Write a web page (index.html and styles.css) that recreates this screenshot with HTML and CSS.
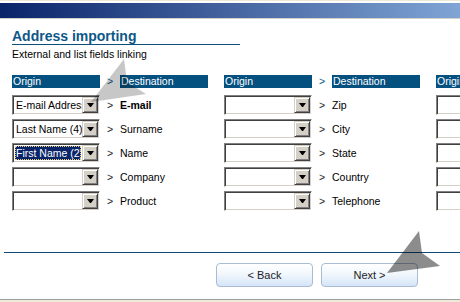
FILE: index.html
```html
<!DOCTYPE html>
<html lang="en">
  <head>
    <meta charset="UTF-8" />
    <title>Address importing</title>
    <link rel="stylesheet" href="styles.css">
  </head>

  <body>
    <div class="window">
      <div class="caption"><div class="caption-fill"></div></div>

      <div class="page">
        <h1 class="title">Address importing</h1>
        <p class="subtitle">External and list fields linking</p>

        <div class="mapping">
          <div class="group">
            <div class="bar">Origin</div><div class="sep head">&gt;</div><div class="bar">Destination</div>

            <div class="combo"><span class="value">E-mail Address</span><span class="drop"></span></div>
            <div class="sep">&gt;</div><div class="dest bold">E-mail</div>

            <div class="combo"><span class="value">Last Name (4)</span><span class="drop"></span></div>
            <div class="sep">&gt;</div><div class="dest">Surname</div>

            <div class="combo"><span class="value selected">First Name (2)</span><span class="drop"></span></div>
            <div class="sep">&gt;</div><div class="dest">Name</div>

            <div class="combo"><span class="value"></span><span class="drop"></span></div>
            <div class="sep">&gt;</div><div class="dest">Company</div>

            <div class="combo"><span class="value"></span><span class="drop"></span></div>
            <div class="sep">&gt;</div><div class="dest">Product</div>
          </div>

          <div class="group">
            <div class="bar">Origin</div><div class="sep head">&gt;</div><div class="bar">Destination</div>

            <div class="combo"><span class="value"></span><span class="drop"></span></div>
            <div class="sep">&gt;</div><div class="dest">Zip</div>

            <div class="combo"><span class="value"></span><span class="drop"></span></div>
            <div class="sep">&gt;</div><div class="dest">City</div>

            <div class="combo"><span class="value"></span><span class="drop"></span></div>
            <div class="sep">&gt;</div><div class="dest">State</div>

            <div class="combo"><span class="value"></span><span class="drop"></span></div>
            <div class="sep">&gt;</div><div class="dest">Country</div>

            <div class="combo"><span class="value"></span><span class="drop"></span></div>
            <div class="sep">&gt;</div><div class="dest">Telephone</div>
          </div>

          <div class="group">
            <div class="bar">Origin</div><div class="sep head">&gt;</div><div class="bar">Destination</div>
            <div class="combo"><span class="value"></span><span class="drop"></span></div>
            <div class="sep">&gt;</div><div class="dest"></div>
            <div class="combo"><span class="value"></span><span class="drop"></span></div>
            <div class="sep">&gt;</div><div class="dest"></div>
            <div class="combo"><span class="value"></span><span class="drop"></span></div>
            <div class="sep">&gt;</div><div class="dest"></div>
            <div class="combo"><span class="value"></span><span class="drop"></span></div>
            <div class="sep">&gt;</div><div class="dest"></div>
            <div class="combo"><span class="value"></span><span class="drop"></span></div>
            <div class="sep">&gt;</div><div class="dest"></div>
          </div>
        </div>
      </div>

      <div class="footer">
        <div class="buttons">
          <button class="btn">&lt; Back</button>
          <button class="btn">Next &gt;</button>
        </div>
        <div class="status"></div>
      </div>

      <!-- tutorial pointers drawn over the dialog -->
      <svg class="pointers" width="460" height="302" viewBox="0 0 460 302">
        <polygon class="light" points="91,102 124,59 127,82 146,94" />
        <polygon class="dark" points="387,273 419,231 422,253 440,266" />
      </svg>
    </div>
  </body>
</html>
```

FILE: styles.css
```css
body {
  margin: 0;
  background: #fff;
  font-family: "Liberation Sans", Arial, sans-serif;
  font-size: 10.5px;
  color: #000;
}

.window {
  position: relative;
  display: flex;
  flex-direction: column;
  width: 460px;
  height: 302px;
  overflow: hidden;
}

.caption {
  border-top: 1px solid #ece9d8;
  border-bottom: 1px solid #d4d0c8;
  padding-top: 2px;
}

.caption-fill {
  height: 15px;
  background: linear-gradient(to right, #0a246a, #7fa4d5);
}

.page {
  flex: 1;
  padding: 10px 0 0 12px;
}

.title {
  margin: 0;
  width: 228px;
  font-size: 14px;
  line-height: 15px;
  font-weight: bold;
  color: #0d5788;
  border-bottom: 1px solid #0d4f7c;
}

.subtitle {
  margin: 3px 0 0;
  line-height: 13px;
}

.mapping {
  display: flex;
  margin-top: 14px;
}

.group {
  flex-shrink: 0;
  display: grid;
  grid-template-columns: 88px 20px 104px;
  grid-template-rows: 16px repeat(5, 20px);
  row-gap: 4px;
}

.bar {
  width: 88px;
  height: 13px;
  line-height: 13px;
  background: #04507f;
  color: #fff;
  padding-left: 1px;
  box-sizing: border-box;
}

.sep {
  text-align: center;
  line-height: 20px;
  color: #222;
}

.sep.head {
  line-height: 13px;
  color: #0d5788;
}

.dest {
  line-height: 20px;
}

.bold {
  font-weight: bold;
}

.combo {
  display: flex;
  align-items: center;
  box-sizing: border-box;
  height: 20px;
  border: 1px solid;
  border-color: #808080 #fff #fff #808080;
  box-shadow: inset 1px 1px #404040, inset -1px -1px #d4d0c8;
  padding: 2px;
  background: #fff;
}

.value {
  flex: 1;
  overflow: hidden;
  white-space: nowrap;
  line-height: 14px;
  height: 14px;
  padding-left: 1px;
  box-sizing: border-box;
}

.value.selected {
  background: #0a246a;
  color: #fff;
  outline: 1px dotted #e6cf78;
  outline-offset: -1px;
  margin-right: 1px;
}

.drop {
  position: relative;
  width: 16px;
  height: 16px;
  margin: -1px -1px -1px 0;
  box-sizing: border-box;
  background: #d4d0c8;
  border: 1px solid;
  border-color: #d4d0c8 #404040 #404040 #d4d0c8;
  box-shadow: inset 1px 1px #fff, inset -1px -1px #808080;
}

.drop::after {
  content: "";
  position: absolute;
  left: 4px;
  top: 5px;
  width: 1px;
  border-top: 4px solid #000;
  border-left: 3px solid transparent;
  border-right: 3px solid transparent;
}

.footer {
  height: 50px;
  margin-left: 4px;
  border-top: 1px solid #0d4a78;
  box-sizing: border-box;
  display: flex;
  flex-direction: column;
}

.buttons {
  display: flex;
  justify-content: flex-end;
  gap: 8px;
  padding: 10px 42px 0 0;
  height: 36px;
  box-sizing: border-box;
}

.btn {
  width: 97px;
  height: 24px;
  padding: 0;
  border: 1px solid #a9bcd3;
  border-radius: 4px;
  background: linear-gradient(#ffffff, #f2f7fd 45%, #d5e5f8);
  font-family: "Liberation Sans", Arial, sans-serif;
  font-size: 11px;
  color: #1c1c1c;
}

.status {
  margin: auto -4px 0;
  height: 3px;
  border-top: 1px solid #a0a0a0;
  background: #ece9d8;
  box-sizing: border-box;
}

.pointers {
  position: absolute;
  left: 0;
  top: 0;
  pointer-events: none;
}

.pointers .light {
  fill: rgba(0, 0, 0, 0.22);
}

.pointers .dark {
  fill: rgba(0, 0, 0, 0.45);
}
```
